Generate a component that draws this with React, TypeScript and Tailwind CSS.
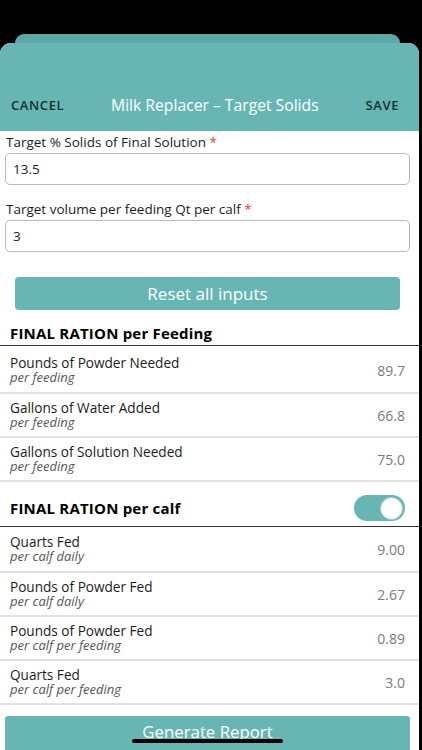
import { useState } from 'react';

const TEAL = 'bg-[#67b6b4]';

type Row = { title: string; sub: string; value: string };

const perFeeding: Row[] = [
  { title: 'Pounds of Powder Needed', sub: 'per feeding', value: '89.7' },
  { title: 'Gallons of Water Added', sub: 'per feeding', value: '66.8' },
  { title: 'Gallons of Solution Needed', sub: 'per feeding', value: '75.0' },
];

const perCalf: Row[] = [
  { title: 'Quarts Fed', sub: 'per calf daily', value: '9.00' },
  { title: 'Pounds of Powder Fed', sub: 'per calf daily', value: '2.67' },
  { title: 'Pounds of Powder Fed', sub: 'per calf per feeding', value: '0.89' },
  { title: 'Quarts Fed', sub: 'per calf per feeding', value: '3.0' },
];

function ResultRow({ row, first }: { row: Row; first?: boolean }) {
  return (
    <div
      className={`flex h-[44px] items-center justify-between pl-[10px] pr-[14px] ${
        first ? '' : 'border-t-2 border-[#e2e2e2]'
      }`}
    >
      <div className="flex flex-col">
        <span className="text-[13.6px] leading-[15px] text-[#1c1c1c]">{row.title}</span>
        <span className="text-[13px] italic leading-[15px] text-[#555]">{row.sub}</span>
      </div>
      <span className="text-[14px] text-[#7a7a7a]">{row.value}</span>
    </div>
  );
}

function Field({ label, value, onChange }: { label: string; value: string; onChange: (v: string) => void }) {
  return (
    <div className="flex flex-col">
      <label className="pl-[6px] text-[13.5px] leading-[16px] text-[#1c1c1c]">
        {label} <span className="text-[#e53935]">*</span>
      </label>
      <input
        value={value}
        onChange={e => onChange(e.target.value)}
        className="mx-[5px] mt-[3px] h-[32px] w-[405px] rounded-[5px] border border-[#b9b9b9] px-[7px] text-[13.5px] text-[#222] outline-none"
      />
    </div>
  );
}

export default function App() {
  const [solids, setSolids] = useState('13.5');
  const [volume, setVolume] = useState('3');
  const [perCalfOn, setPerCalfOn] = useState(true);

  return (
    <div
      className="relative h-[750px] w-[422px] overflow-hidden bg-black pt-[34px]"
      style={{ fontFamily: '"Open Sans", "Liberation Sans", sans-serif' }}
    >
      {/* stacked sheet behind */}
      <div className="ml-[15px] h-[9px] w-[385px] rounded-t-[9px] bg-[#5ea8a5]" />

      <div className="h-[707px] w-[419px] overflow-hidden rounded-t-[11px] bg-white">
        <header className={`${TEAL} h-[88px] pt-[54px]`}>
          <div className="flex h-[18px] items-center justify-between pl-[11px] pr-[20px]">
            <button className="text-[13px] font-semibold tracking-[0.6px] text-[#16302f]">CANCEL</button>
            <h1 className="text-[15.7px] text-white">Milk Replacer – Target Solids</h1>
            <button className="text-[13px] font-semibold tracking-[0.6px] text-[#16302f]">SAVE</button>
          </div>
        </header>

        <div className="flex flex-col pt-[3px]">
          <Field label="Target % Solids of Final Solution" value={solids} onChange={setSolids} />
          <div className="h-[16px]" />
          <Field label="Target volume per feeding Qt per calf" value={volume} onChange={setVolume} />

          <button
            onClick={() => {
              setSolids('');
              setVolume('');
            }}
            className={`${TEAL} mx-[15px] mt-[25px] h-[33px] w-[385px] rounded-[4px] text-[17px] text-white`}
          >
            Reset all inputs
          </button>

          <div className="flex h-[36px] items-end border-b border-[#333] px-[10px] pb-[3px]">
            <h2 className="text-[15px] font-bold leading-[17px] tracking-[0.2px] text-black">FINAL RATION per Feeding</h2>
          </div>
          <div className="pt-[2px]">
            {perFeeding.map((r, i) => (
              <ResultRow key={i} row={r} first={i === 0} />
            ))}
          </div>

          <div className="flex h-[47px] items-center justify-between border-t-2 border-b border-t-[#e2e2e2] border-b-[#333] pl-[10px] pr-[14px] pt-[8px]">
            <h2 className="text-[15px] font-bold leading-[17px] tracking-[0.2px] text-black">FINAL RATION per calf</h2>
            <button
              onClick={() => setPerCalfOn(!perCalfOn)}
              className={`flex h-[26px] w-[51px] items-center rounded-full p-[2px] ${
                perCalfOn ? `${TEAL} justify-end` : 'justify-start bg-[#ddd]'
              }`}
            >
              <span className="h-[23px] w-[23px] rounded-full border border-[#9fcfcd] bg-white" />
            </button>
          </div>
          <div>
            {perCalf.map((r, i) => (
              <ResultRow key={i} row={r} first={i === 0} />
            ))}
          </div>

          <div className="border-t-2 border-[#e2e2e2] pt-[11px]">
            <button
              className={`${TEAL} mx-[5px] flex h-[40px] w-[405px] items-start justify-center rounded-[3px] pt-[6px] text-[16.8px] leading-[20px] text-white`}
            >
              Generate Report
            </button>
          </div>
        </div>
      </div>

      {/* home indicator */}
      <div className="absolute left-[132px] top-[739px] h-[4px] w-[151px] rounded-full bg-black" />
    </div>
  );
}
